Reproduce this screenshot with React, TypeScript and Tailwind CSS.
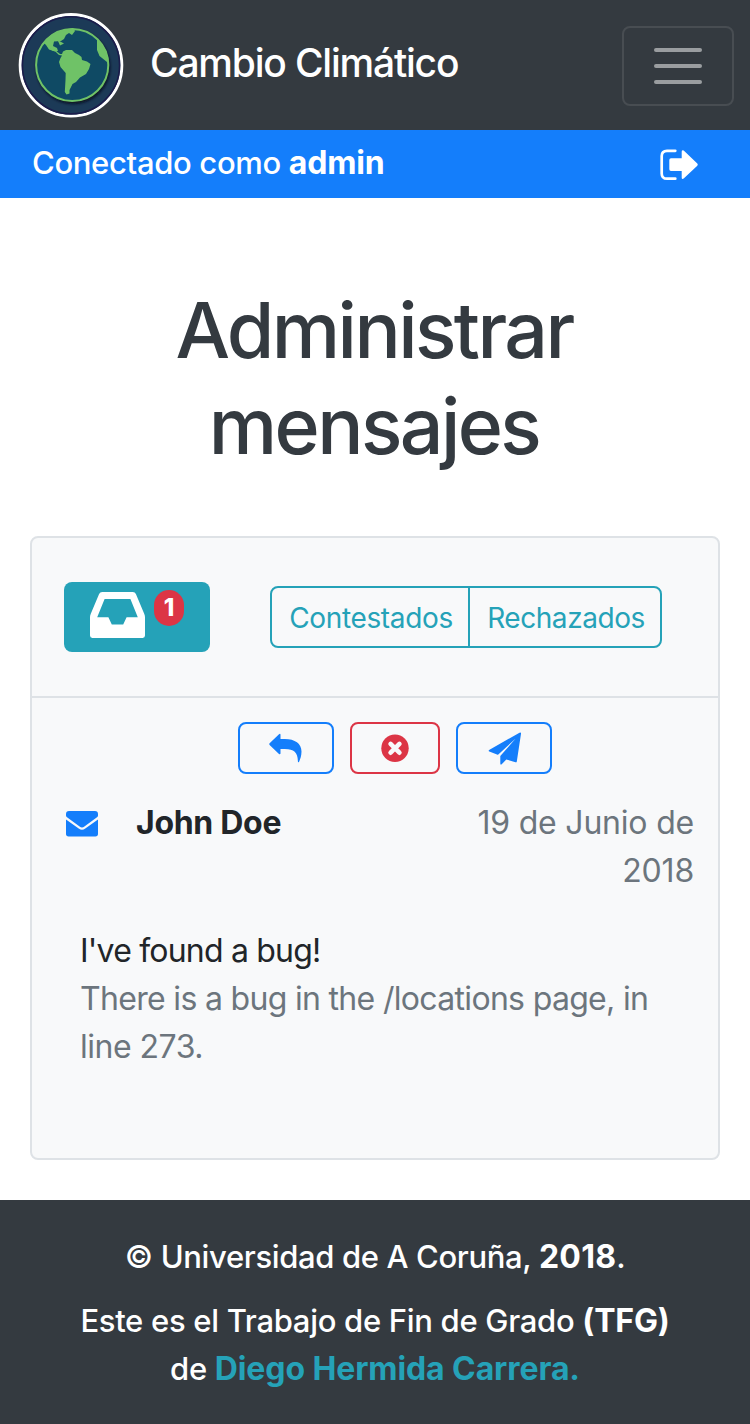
import React from "react";

const Globe = () => (
  <svg className="block h-[108px] w-[108px]" viewBox="17 11 108 108">
    <defs>
      <filter id="shade" x="-20%" y="-20%" width="140%" height="140%">
        <feGaussianBlur stdDeviation="1.6" />
      </filter>
      <clipPath id="disc">
        <circle cx="72.2" cy="65" r="36.5" />
      </clipPath>
    </defs>
    <circle cx="71" cy="65.3" r="50.8" fill="#1c3a57" stroke="#fff" strokeWidth="3" />
    <circle cx="71" cy="65.3" r="48.6" fill="none" stroke="#1b1c4b" strokeWidth="1.6" />
    <circle cx="73.2" cy="67" r="36.8" fill="#07101d" filter="url(#shade)" />
    <circle cx="72.2" cy="65" r="36.5" fill="#0f4a64" />
    <g clipPath="url(#disc)" fill="#6fc267">
      <path d="M44 43 L47 43 L49.5 46 L50.5 49 L55 49.5 L57.5 52 L60 54 L62 54 L63 51.5 L66 50 L72 50 L75 53 L79 55 L81.5 57 L82 60 L87 61.5 L90.5 64 L89 69 L86 74 L80 77.5 L76 82 L72.5 84 L69.5 90 L69.5 93.5 L66.5 94.5 L64.8 92 L65.5 80 L65.7 73 L60.5 67 L59 62 L60.5 58 L62 55.5 L59 55 L55.5 51.8 L49 49.5 L46 45 Z" />
      <path d="M43 43 L54 30 L73 27 L75 31 L72 35 L69 33 L66 35 L64 39 L61 41 L54 41.5 L53 46 L57 48 L58 51 L53 51 L49 48 L46.5 43.5 Z" />
      <path d="M57.5 40 L64 43.5 L60 45.5 Z" />
      <path d="M97 39 L97 50 L99.5 56 L107 62 L111 59 L107 44 Z" />
    </g>
    <circle cx="72.2" cy="65" r="36.1" fill="none" stroke="#6fc267" strokeWidth="2" />
  </svg>
);

const LogOut = () => (
  <svg className="mt-[2px] block h-[34px] w-[40px]" viewBox="659 148 40 34">
    <path d="M675.3 150.8H667q-5.3 0-5.3 5.3v17.3q0 5.3 5.3 5.3h8.3" fill="none" stroke="#fff" strokeWidth="2.7" strokeLinecap="round" />
    <path d="M671 158.3h10.7v-6.6q0-2.3 2-1.1l13.6 13q1 1.1 0 2.2l-13.6 12.8q-2 1.2-2-1.1V171H671q-1.7 0-1.7-1.7V160q0-1.7 1.7-1.7z" fill="#fff" />
  </svg>
);

const Inbox = () => (
  <svg className="block h-[46px] w-[55px]" viewBox="90 592 55 46">
    <path fillRule="evenodd" fill="#fff" d="M102.2 592h30.6q2.2 0 3.1 2.1l8.3 19.6q.8 1.8.8 3.6v18.3q0 2.4-2.4 2.4H92.4q-2.4 0-2.4-2.4v-18.3q0-1.8.8-3.6l8.3-19.6q.9-2.1 3.1-2.1zM104.6 599l-7.4 18.3h11.2l3.4 7.2h11.4l3.4-7.2h11.2L130.4 599z" />
  </svg>
);

const Reply = () => (
  <svg className="block h-[32px] w-[36px]" viewBox="268 732 36 32">
    <path fill="#147efb" d="M269.6 743.2l9.4-9q1.5-1.1 1.5.6v4.2h4.3C295 739 301.5 743.6 301.5 751.6c0 4.1-1.2 7.6-2.4 10.1q-1.2 1.5-1.2-.4c-.2-9.3-3.9-12.1-13-12.3h-4.4v4.2q0 1.7-1.5.7l-9.4-9q-.8-.9 0-1.7z" />
  </svg>
);

const Reject = () => (
  <svg className="block h-[28px] w-[28px]" viewBox="0 0 28 28">
    <circle cx="14" cy="14.3" r="13.7" fill="#dc3545" />
    <path d="M9.6 9.9l8.8 8.8M18.4 9.9l-8.8 8.8" stroke="#f8f9fa" strokeWidth="4.6" strokeLinecap="round" />
  </svg>
);

const Plane = () => (
  <svg className="block h-[34px] w-[34px]" viewBox="487 731 34 34">
    <path fill="#147efb" d="M489.1 750l30.4-17.3q1.7-.8 1.5 1l-4.2 27.7q-.2 1.2-1.3.8l-9.2-2.8-4.6 4.9q-1.3 1-1.4-.7v-7.7L515.7 738.4l-17.4 16q-.6.5-1.3.2l-7.7-3.2q-1.1-.7-.2-1.4z" />
  </svg>
);

const Envelope = () => (
  <svg className="block h-[26px] w-[32px]" viewBox="66 811 32 26">
    <path fill="#147efb" d="M69 811h26q3 0 3 3v1.4q0 1.2-1 1.9l-12.6 9.2q-2.4 1.8-4.8 0L67 817.3q-1-.7-1-1.9V814q0-3 3-3zM66 819.5l12.7 9.1q3.3 2.4 6.6 0l12.7-9.1V834q0 2.4-2.6 2.4H68.6Q66 836.4 66 834z" />
  </svg>
);

export default function App() {
  return (
    <div className="flex h-[1424px] w-[750px] flex-col bg-white font-['Inter','Liberation_Sans',sans-serif] text-[31px] leading-[48px] text-[#212529]">
      <nav className="flex h-[130px] shrink-0 items-center bg-[#343a40] pr-4 pl-[17px]">
        <Globe />
        <span className="ml-[25px] pb-[4px] text-[39px] leading-[60px] font-[470] tracking-[-1.2px] text-white">Cambio Climático</span>
        <button className="mt-[2px] ml-auto flex h-[80px] w-[112px] flex-col items-center justify-center gap-3 rounded-[8px] border-2 border-[#484d52]">
          <span className="h-1 w-12 rounded-full bg-[#9a9da0]" />
          <span className="h-1 w-12 rounded-full bg-[#9a9da0]" />
          <span className="h-1 w-12 rounded-full bg-[#9a9da0]" />
        </button>
      </nav>
      <div className="flex h-[68px] shrink-0 items-center justify-between bg-[#147efb] pr-[51px] pl-8 text-white">
        <p className="pb-[2px] font-[450] tracking-[-0.33px]">
          Conectado como <b className="text-[32px] tracking-[-0.2px]">admin</b>
        </p>
        <LogOut />
      </div>
      <h1 className="mt-[84px] pr-[2px] text-center text-[77px] leading-[96px] font-medium tracking-[-2.6px] text-[#343a40]">
        Administrar
        <br />
        mensajes
      </h1>
      <main className="mx-[30px] mt-[62px] h-[624px] shrink-0 rounded-[8px] border-2 border-[#dee2e6] bg-[#f8f9fa]">
        <div className="flex h-[160px] items-start border-b-2 border-[#dee2e6] pl-8">
          <button className="mt-[44px] flex h-[70px] w-[146px] items-start rounded-[8px] bg-[#25a2b8] pt-2 pl-[26px]">
            <span className="mt-[2px]">
              <Inbox />
            </span>
            <span className="ml-[9px] flex h-[36px] w-[30px] items-center justify-center rounded-full bg-[#dc3545] text-[24px] leading-[24px] font-extrabold text-white">1</span>
          </button>
          <div className="mt-12 ml-[60px] flex h-[62px] w-[392px] rounded-[8px] border-2 border-[#25a2b8] text-[28px] leading-[60px] text-[#25a2b8]">
            <button className="w-[198px] border-r-2 border-[#25a2b8] pl-[2px] tracking-[-0.35px]">Contestados</button>
            <button className="flex-1 pl-[2px] tracking-[-0.45px]">Rechazados</button>
          </div>
        </div>
        <div className="ml-[206px] flex gap-4 pt-6">
          <button className="flex h-[52px] w-[96px] items-center justify-center rounded-[8px] border-2 border-[#147efb]">
            <Reply />
          </button>
          <button className="flex h-[52px] w-[90px] items-center justify-center rounded-[8px] border-2 border-[#dc3545]">
            <Reject />
          </button>
          <button className="flex h-[52px] w-[96px] items-center justify-center rounded-[8px] border-2 border-[#147efb]">
            <Plane />
          </button>
        </div>
        <div className="mt-[25px] flex pr-[24px] pl-[34px]">
          <span className="mt-3">
            <Envelope />
          </span>
          <b className="ml-[38px] text-[32px] tracking-[-0.3px]">John Doe</b>
          <span className="ml-auto w-[240px] text-right text-[32px] tracking-[-0.2px] text-[#6c757d]">19 de Junio de 2018</span>
        </div>
        <div className="mt-8 pl-12 text-[32px]">
          <p className="tracking-[-0.8px]">I've found a bug!</p>
          <p className="w-[600px] tracking-[-0.68px] text-[#6c757d]">
            There is a bug in the /locations page, in
            <br />
            <span className="tracking-[-0.5px]">line 273.</span>
          </p>
        </div>
      </main>
      <footer className="mt-10 h-[224px] shrink-0 bg-[#343a40] pt-[33px] text-center font-medium text-white">
        <p className="tracking-[-0.35px]">
          © Universidad de A Coruña, <b className="text-[32px] tracking-[0.2px]">2018</b>.
        </p>
        <p className="mt-4 tracking-[-0.3px]">
          Este es el Trabajo de Fin de Grado <b className="text-[32px] tracking-[-0.2px]">(TFG)</b>
          <br />
          de <b className="text-[32px] tracking-[-0.1px] text-[#25a2b8]">Diego Hermida Carrera.</b>
        </p>
      </footer>
    </div>
  );
}
